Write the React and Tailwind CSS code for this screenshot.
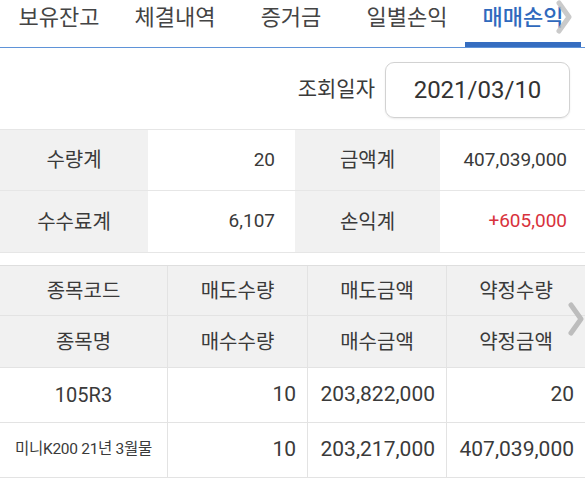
import React from 'react';

const tabs = ['보유잔고', '체결내역', '증거금', '일별손익', '매매손익'];

const Chevron = ({ className }) => (
  <svg className={className} width="16" height="34" viewBox="0 0 16 34" fill="none">
    <polyline points="3,3 13,17 3,31" stroke="#bdbdbd" strokeWidth="5" strokeLinecap="round" strokeLinejoin="round" />
  </svg>
);

const App = () => {
  const active = 4;

  return (
    <div className="w-[585px] h-[478px] overflow-hidden bg-white text-[#3a3a3a] font-['Roboto','Noto_Sans_CJK_KR',sans-serif]">
      {/* 탭 */}
      <div className="relative flex h-[48px] pl-[1px] border-b border-[#5f93d8]">
        {tabs.map((t, i) => (
          <div
            key={t}
            className={`relative w-[116px] flex justify-center pt-[3px] text-[22px] leading-[30px] ${
              i === active ? 'text-[#2f69bd] font-medium' : 'text-[#444]'
            }`}
          >
            {t}
            {i === active && <div className="absolute left-0 right-0 bottom-0 h-[5px] bg-[#356dc0]" />}
          </div>
        ))}
        <Chevron className="absolute left-[556px] top-[0px] opacity-80" />
      </div>

      {/* 조회일자 */}
      <div className="flex items-center justify-end h-[81px] pr-[15px] pt-[3px]">
        <span className="text-[21px] mr-[10px]">조회일자</span>
        <div className="w-[185px] h-[56px] flex items-center justify-center rounded-[9px] border border-[#d2d2d2] shadow-[0_1px_2px_rgba(0,0,0,0.08)] text-[24px] text-[#333]">
          2021/03/10
        </div>
      </div>

      {/* 합계 */}
      <div className="border-t border-[#e6e6e6] text-[19px]">
        <div className="flex h-[61px] border-b border-[#e6e6e6]">
          <div className="w-[148px] bg-[#f1f1f1] flex items-center justify-center text-[20px]">수량계</div>
          <div className="w-[147px] flex items-center justify-end pr-[20px]">20</div>
          <div className="w-[145px] bg-[#f1f1f1] flex items-center justify-center text-[20px]">금액계</div>
          <div className="flex-1 flex items-center justify-end pr-[18px]">407,039,000</div>
        </div>
        <div className="flex h-[62px] border-b border-[#e6e6e6]">
          <div className="w-[148px] bg-[#f1f1f1] flex items-center justify-center text-[20px]">수수료계</div>
          <div className="w-[147px] flex items-center justify-end pr-[20px]">6,107</div>
          <div className="w-[145px] bg-[#f1f1f1] flex items-center justify-center text-[20px]">손익계</div>
          <div className="flex-1 flex items-center justify-end pr-[18px] text-[#d8323c]">+605,000</div>
        </div>
      </div>

      {/* 내역 */}
      <div className="relative mt-[12px] border-t border-[#dedede]">
        <div className="bg-[#f1f1f1] text-[20px]">
          <div className="grid grid-cols-[168px_140px_139px_1fr] h-[50px] border-b border-[#e3e3e3]">
            <div className="flex items-center justify-center border-r border-[#e3e3e3]">종목코드</div>
            <div className="flex items-center justify-center border-r border-[#e3e3e3]">매도수량</div>
            <div className="flex items-center justify-center border-r border-[#e3e3e3]">매도금액</div>
            <div className="flex items-center justify-center">약정수량</div>
          </div>
          <div className="grid grid-cols-[168px_140px_139px_1fr] h-[52px] border-b border-[#e3e3e3]">
            <div className="flex items-center justify-center border-r border-[#e3e3e3]">종목명</div>
            <div className="flex items-center justify-center border-r border-[#e3e3e3]">매수수량</div>
            <div className="flex items-center justify-center border-r border-[#e3e3e3]">매수금액</div>
            <div className="flex items-center justify-center">약정금액</div>
          </div>
        </div>
        <div className="grid grid-cols-[168px_140px_139px_1fr] h-[55px] border-b border-[#e3e3e3] text-[21px]">
          <div className="flex items-center justify-center border-r border-[#e3e3e3] text-[20px]">105R3</div>
          <div className="flex items-center justify-end pr-[11px] border-r border-[#e3e3e3]">10</div>
          <div className="flex items-center justify-end pr-[11px] border-r border-[#e3e3e3]">203,822,000</div>
          <div className="flex items-center justify-end pr-[11px]">20</div>
        </div>
        <div className="grid grid-cols-[168px_140px_139px_1fr] h-[55px] border-b border-[#e3e3e3] text-[21px]">
          <div className="flex items-center justify-center border-r border-[#e3e3e3] text-[15.5px] tracking-[-0.3px]">미니K200 21년 3월물</div>
          <div className="flex items-center justify-end pr-[11px] border-r border-[#e3e3e3]">10</div>
          <div className="flex items-center justify-end pr-[11px] border-r border-[#e3e3e3]">203,217,000</div>
          <div className="flex items-center justify-end pr-[11px]">407,039,000</div>
        </div>
        <Chevron className="absolute left-[568px] top-[36px]" />
      </div>
    </div>
  );
};

export default App;
